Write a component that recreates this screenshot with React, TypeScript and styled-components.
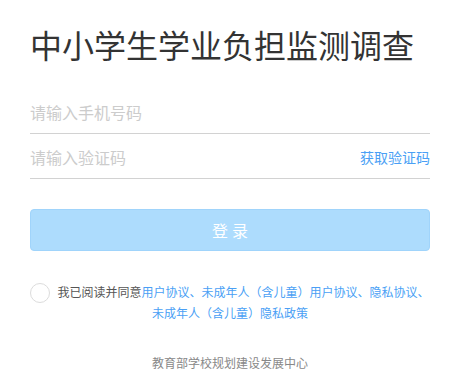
import React from "react";
import styled, { createGlobalStyle } from "styled-components";

const Global = createGlobalStyle`
  html, body { margin: 0; padding: 0; background: #fff; }
  body { font-family: "Noto Sans CJK SC", "Noto Sans", sans-serif; }
  * { box-sizing: border-box; }
`;

const Page = styled.div`
  padding: 0 21px 0 30px;
  width: 451px;
`;

const Title = styled.h1`
  margin: 20px 0 0;
  font-size: 32px;
  line-height: 48px;
  font-weight: 400;
  color: #333;
  white-space: nowrap;
`;

const Form = styled.div`
  margin-top: 21px;
  width: 400px;
`;

const Field = styled.div`
  display: flex;
  align-items: center;
  justify-content: space-between;
  height: 45px;
  padding-top: 2px;
  border-bottom: 1px solid #d2d2d2;
`;

const Input = styled.input`
  flex: 1;
  border: none;
  outline: none;
  padding: 0;
  font-family: inherit;
  font-size: 16px;
  color: #333;
  background: transparent;
  &::placeholder { color: #cccccc; }
`;

const CodeLink = styled.span`
  font-size: 14px;
  color: #4a9ff5;
  cursor: pointer;
`;

const Button = styled.button`
  display: block;
  width: 400px;
  height: 42px;
  margin-top: 30px;
  border: 1px solid #a0d4fb;
  border-radius: 4px;
  background: #addcfd;
  color: #fff;
  font-family: inherit;
  font-size: 16px;
  letter-spacing: 4px;
  padding: 0 0 0 4px;
`;

const Agreement = styled.p`
  margin: 31px 0 0;
  width: 400px;
  text-align: center;
  font-size: 12px;
  line-height: 19px;
  color: #555;
`;

const Check = styled.span`
  display: inline-block;
  width: 20px;
  height: 20px;
  margin-right: 7px;
  border: 1px solid #dcdcdc;
  border-radius: 50%;
  vertical-align: -6px;
  margin-top: -2px;
`;

const Link = styled.span`
  color: #4a9ff5;
`;

const Footer = styled.div`
  margin-top: 34px;
  width: 400px;
  text-align: center;
  font-size: 12px;
  line-height: 14px;
  color: #888;
`;

export default function App() {
  return (
    <Page>
      <Global />
      <Title>中小学生学业负担监测调查</Title>
      <Form>
        <Field>
          <Input placeholder="请输入手机号码" />
        </Field>
        <Field>
          <Input placeholder="请输入验证码" />
          <CodeLink>获取验证码</CodeLink>
        </Field>
        <Button>登录</Button>
      </Form>
      <Agreement>
        <Check />
        我已阅读并同意
        <Link>用户协议、未成年人（含儿童）用户协议、隐私协议、未成年人（含儿童）隐私政策</Link>
      </Agreement>
      <Footer>教育部学校规划建设发展中心</Footer>
    </Page>
  );
}
